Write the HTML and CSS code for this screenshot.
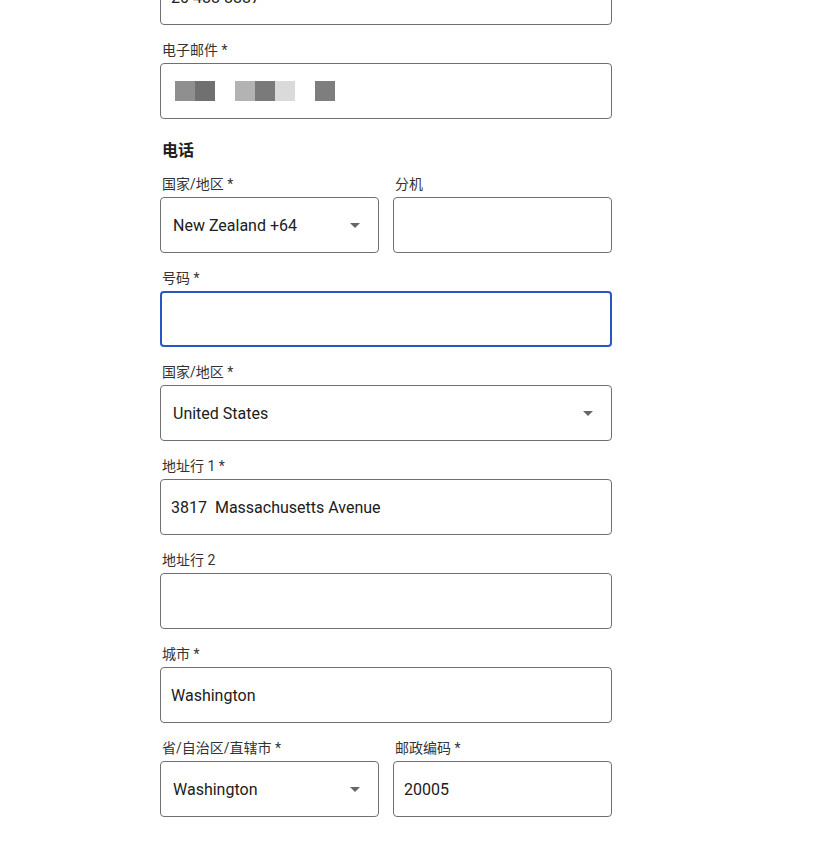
FILE: index.html
```html
<!DOCTYPE html>
<html lang="zh-CN">

<head>
    <meta charset="UTF-8">
    <meta name="viewport" content="width=device-width, initial-scale=1.0">
    <title>地址</title>
    <link rel="stylesheet" href="styles.css">
</head>

<body>
    <div class="address-form">
        <!-- Phone (scrolled above) -->
        <div class="field">
            <div class="box"><span class="value">20 488 8887</span></div>
        </div>

        <!-- Email -->
        <div class="field">
            <label>电子邮件 *</label>
            <div class="box">
                <span class="blur">
                    <i class="px" style="background:#8f8f8f"></i><i class="px" style="background:#707070"></i>
                    <i class="gap"></i>
                    <i class="px" style="background:#b3b3b3"></i><i class="px" style="background:#7a7a7a"></i><i class="px" style="background:#dadada"></i>
                    <i class="gap"></i>
                    <i class="px" style="background:#7e7e7e"></i>
                </span>
            </div>
        </div>

        <h2 class="section-title">电话</h2>

        <div class="row">
            <div class="field">
                <label>国家/地区 *</label>
                <div class="box select"><span class="value">New Zealand +64</span><span class="arrow"></span></div>
            </div>
            <div class="field">
                <label>分机</label>
                <div class="box"></div>
            </div>
        </div>

        <div class="field">
            <label>号码 *</label>
            <div class="box focused"></div>
        </div>

        <div class="field">
            <label>国家/地区 *</label>
            <div class="box select"><span class="value">United States</span><span class="arrow"></span></div>
        </div>

        <div class="field">
            <label>地址行 1 *</label>
            <div class="box"><span class="value">3817&nbsp; Massachusetts Avenue</span></div>
        </div>

        <div class="field">
            <label>地址行 2</label>
            <div class="box"></div>
        </div>

        <div class="field">
            <label>城市 *</label>
            <div class="box"><span class="value">Washington</span></div>
        </div>

        <div class="row">
            <div class="field">
                <label>省/自治区/直辖市 *</label>
                <div class="box select"><span class="value">Washington</span><span class="arrow"></span></div>
            </div>
            <div class="field">
                <label>邮政编码 *</label>
                <div class="box"><span class="value">20005</span></div>
            </div>
        </div>
    </div>
</body>

</html>
```

FILE: styles.css
```css
body {
    margin: 0;
    padding: 0;
    background: #fff;
    font-family: Roboto, 'Noto Sans CJK SC', sans-serif;
    color: #202020;
}

.address-form {
    width: 452px;
    margin: -31px 0 0 160px;
}

.field {
    margin-bottom: 16px;
}

.field label {
    display: block;
    font-size: 14px;
    line-height: 18px;
    height: 18px;
    margin: 0 0 4px 2px;
    color: #333;
}

.box {
    box-sizing: border-box;
    height: 56px;
    border: 1px solid #707070;
    border-radius: 4px;
    display: flex;
    align-items: center;
    padding: 0 10px;
    font-size: 16px;
    background: #fff;
}

.box.select {
    padding: 0 12px;
    justify-content: space-between;
}

.box.focused {
    border: 2px solid #2b55c2;
}

.arrow {
    width: 0;
    height: 0;
    border-left: 5px solid transparent;
    border-right: 5px solid transparent;
    border-top: 5px solid #666;
    margin-right: 6px;
}

.section-title {
    font-size: 16px;
    font-weight: 700;
    line-height: 22px;
    margin: 21px 0 13px 2px;
}

.row {
    display: grid;
    grid-template-columns: 1fr 1fr;
    gap: 14px;
}

.blur {
    display: flex;
    align-items: center;
    margin-left: 4px;
}

.blur i {
    display: block;
    height: 20px;
}

.blur .px {
    width: 20px;
}

.blur .gap {
    width: 20px;
}
```
